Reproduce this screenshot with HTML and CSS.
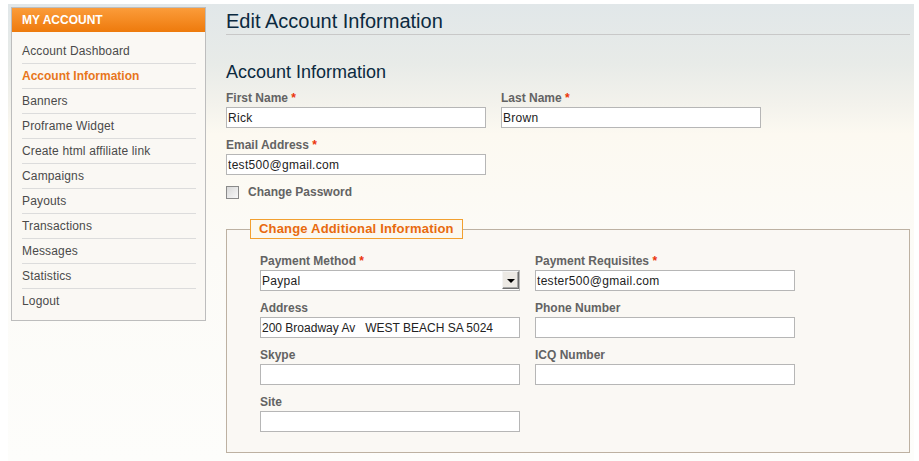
FILE: index.html
```html
<!DOCTYPE html>
<html>
<head>
<meta charset="utf-8">
<link rel="stylesheet" href="styles.css">
</head>
<body>
<div class="page">
  <aside class="sidebar">
    <div class="side-head">My Account</div>
    <ul class="side-list">
      <li>Account Dashboard</li>
      <li class="active">Account Information</li>
      <li>Banners</li>
      <li>Proframe Widget</li>
      <li>Create html affiliate link</li>
      <li>Campaigns</li>
      <li>Payouts</li>
      <li>Transactions</li>
      <li>Messages</li>
      <li>Statistics</li>
      <li class="last">Logout</li>
    </ul>
  </aside>
  <main class="main">
    <h1 class="title">Edit Account Information</h1>
    <h2 class="subtitle">Account Information</h2>
    <div class="grid">
      <div class="field">
        <label class="lbl">First Name <em>*</em></label>
        <input class="inp" type="text" value="Rick">
      </div>
      <div class="field">
        <label class="lbl">Last Name <em>*</em></label>
        <input class="inp" type="text" value="Brown">
      </div>
      <div class="field">
        <label class="lbl">Email Address <em>*</em></label>
        <input class="inp" type="text" value="test500@gmail.com">
      </div>
    </div>
    <div class="check-row">
      <input class="chk" type="checkbox">
      <span class="lbl">Change Password</span>
    </div>
    <fieldset class="fs">
      <legend class="legend">Change Additional Information</legend>
      <div class="grid fs-grid">
        <div class="field">
          <label class="lbl">Payment Method <em>*</em></label>
          <div class="sel-wrap">
            <select class="sel"><option>Paypal</option></select>
            <span class="sel-btn"><span class="tri"></span></span>
          </div>
        </div>
        <div class="field">
          <label class="lbl">Payment Requisites <em>*</em></label>
          <input class="inp" type="text" value="tester500@gmail.com">
        </div>
        <div class="field">
          <label class="lbl">Address</label>
          <input class="inp inp-tight" type="text" value="200 Broadway Av&nbsp;&nbsp; WEST BEACH SA 5024">
        </div>
        <div class="field">
          <label class="lbl">Phone Number</label>
          <input class="inp" type="text" value="">
        </div>
        <div class="field">
          <label class="lbl">Skype</label>
          <input class="inp" type="text" value="">
        </div>
        <div class="field">
          <label class="lbl">ICQ Number</label>
          <input class="inp" type="text" value="">
        </div>
        <div class="field">
          <label class="lbl">Site</label>
          <input class="inp" type="text" value="">
        </div>
      </div>
    </fieldset>
  </main>
</div>
</body>
</html>
```
FILE: styles.css
```css
* { box-sizing: border-box; }
html, body { margin: 0; padding: 0; background: #fff; }
body { font-family: "Liberation Sans", Arial, sans-serif; font-size: 12px; color: #444; }

.page {
  display: flex;
  align-items: flex-start;
  margin: 4px 5px 0 8px;
  width: 906px;
  height: 457px;
  padding: 3px 0 0 3px;
  background: linear-gradient(to bottom, #e1e7e9 0px, #e8ebe8 60px, #f3f2ec 100px, #fcf9f1 130px, #fcfbf7 250px, #fdfdfb 100%);
}

.sidebar {
  width: 195px;
  flex: none;
  border: 1px solid #bdbdbd;
  background: #faf8f4;
}
.side-head {
  height: 24px;
  line-height: 24px;
  padding-left: 10px;
  background: linear-gradient(to bottom, #fb9c3a, #ee7a0c);
  color: #fff;
  font-weight: bold;
  font-size: 12px;
  text-transform: uppercase;
}
.side-list {
  list-style: none;
  margin: 0;
  padding: 7px 9px 7px 10px;
}
.side-list li {
  height: 25px;
  line-height: 24px;
  border-bottom: 1px solid #dcdcdc;
  color: #4a4a4a;
  font-size: 12px;
  letter-spacing: 0.15px;
}
.side-list li.active { color: #e8761c; font-weight: bold; letter-spacing: 0; }
.side-list li.last { border-bottom: none; height: 24px; }

.main {
  margin-left: 20px;
  width: 684px;
  flex: none;
}
.title {
  margin: 0;
  height: 28px;
  line-height: 27px;
  padding-top: 1px;
  font-size: 20px;
  font-weight: normal;
  color: #0b2a40;
  border-bottom: 1px solid #c8c8c8;
}
.subtitle {
  margin: 26px 0 6px;
  height: 22px;
  line-height: 22px;
  font-size: 18px;
  font-weight: normal;
  color: #0b2a40;
}

.grid {
  display: grid;
  grid-template-columns: 260px 260px;
  column-gap: 15px;
  row-gap: 8px;
}
.field { display: flex; flex-direction: column; }
.lbl {
  height: 16px;
  line-height: 18px;
  margin-bottom: 2px;
  font-weight: bold;
  font-size: 12px;
  color: #636363;
}
.lbl em { font-style: normal; color: #eb340a; }
.inp {
  width: 260px;
  height: 21px;
  border: 1px solid #b6b6b6;
  background: #fff;
  padding: 0 1px;
  font-family: "Liberation Sans", Arial, sans-serif;
  font-size: 12px;
  letter-spacing: 0.3px;
  color: #222;
  outline: none;
}
.inp-tight { letter-spacing: 0; }

.check-row {
  display: flex;
  align-items: center;
  margin-top: 8px;
  height: 16px;
}
.chk {
  appearance: none;
  -webkit-appearance: none;
  margin: 2px 9px 0 0;
  width: 13px;
  height: 13px;
  border: 1px solid #8a8a8a;
  background: linear-gradient(135deg, #d8d8d8, #f8f8f8);
}
.check-row .lbl { margin: 0; }

.fs {
  margin: 20px 0 0;
  padding: 13px 0 20px 23px;
  border: 1px solid #bdb1a2;
  background: #faf8f4;
  min-width: 0;
}
.legend {
  padding: 0 8px;
  height: 20px;
  line-height: 18px;
  border: 1px solid #f2a030;
  background: #fbf8f0;
  color: #e86a0e;
  font-weight: bold;
  font-size: 13px;
  letter-spacing: 0.18px;
}
.fs-grid { margin-left: 10px; }

.sel-wrap { position: relative; width: 260px; height: 21px; }
.sel {
  appearance: none;
  -webkit-appearance: none;
  width: 260px;
  height: 21px;
  border: 1px solid #b6b6b6;
  border-radius: 0;
  background: #fff;
  padding: 0 1px;
  font-family: "Liberation Sans", Arial, sans-serif;
  font-size: 12px;
  letter-spacing: 0.3px;
  color: #222;
  outline: none;
}
.sel-btn {
  position: absolute;
  right: 1px;
  top: 1px;
  width: 17px;
  height: 18px;
  background: #ece9e4;
  border-top: 1px solid #f4f4f4;
  border-left: 1px solid #f4f4f4;
  border-right: 1px solid #6e6e6e;
  border-bottom: 1px solid #6e6e6e;
  box-shadow: inset -1px -1px 0 #a8a8a8;
  display: flex;
  align-items: center;
  justify-content: center;
}
.tri {
  width: 0;
  height: 0;
  border-left: 4px solid transparent;
  border-right: 4px solid transparent;
  border-top: 4px solid #000;
  margin-top: 1px;
}
```
